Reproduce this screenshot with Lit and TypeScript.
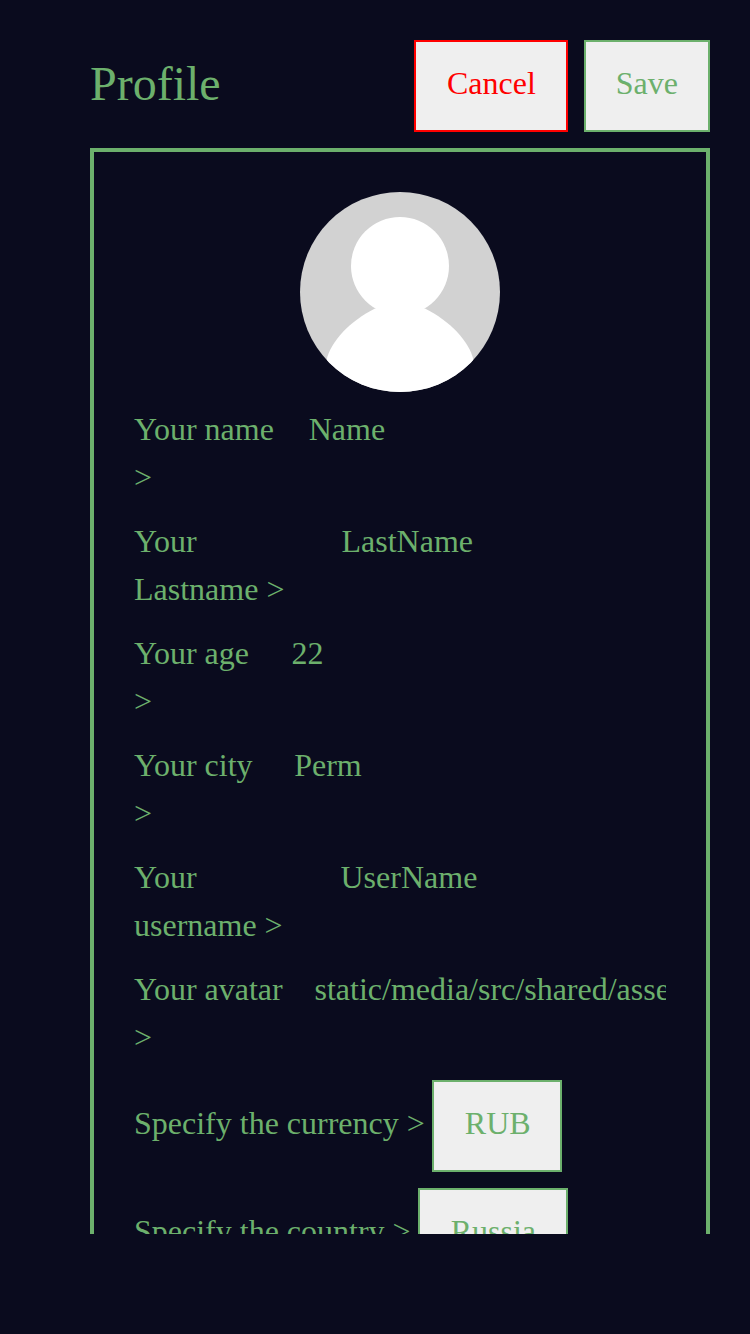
import { LitElement, html, css } from "lit";
import { customElement } from "lit/decorators.js";

interface Field {
  lines: [string, string];
  value: string;
  labelWidth: number;
}

const FIELDS: Field[] = [
  { lines: ["Your name", ">"], value: "Name", labelWidth: 174.7 },
  { lines: ["Your", "Lastname >"], value: "LastName", labelWidth: 207.5 },
  { lines: ["Your age", ">"], value: "22", labelWidth: 157.5 },
  { lines: ["Your city", ">"], value: "Perm", labelWidth: 160.2 },
  { lines: ["Your", "username >"], value: "UserName", labelWidth: 206.5 },
  { lines: ["Your avatar", ">"], value: "static/media/src/shared/assets/avatar.png", labelWidth: 180.5 },
];

const SELECTS = [
  { label: "Specify the currency >", value: "RUB" },
  { label: "Specify the country >", value: "Russia" },
];

@customElement("app-root")
export class AppRoot extends LitElement {
  static styles = css`
    :host {
      display: block;
      box-sizing: border-box;
      height: 1334px;
      padding: 40px 40px 100px 90px;
      overflow: hidden;
      background: #0a0b1e;
      color: #6cb06c;
      font: 32px/48px "Liberation Serif", "Times New Roman", serif;
    }
    .page {
      height: 100%;
      overflow: hidden;
    }
    .header {
      display: flex;
      height: 92px;
      gap: 16px;
      margin-bottom: 16px;
    }
    .title {
      margin: 0 auto 0 0;
      font-size: 48px;
      font-weight: 400;
      line-height: 88px;
    }
    .btn {
      box-sizing: border-box;
      height: 92px;
      margin: 0;
      padding: 0 30px 6px;
      border: 2px solid #6cb06c;
      border-radius: 0;
      background: #efefef;
      color: #6cb06c;
      font: inherit;
      line-height: 82px;
    }
    .cancel {
      padding-left: 30.5px;
      border-color: #ff0000;
      color: #ff0000;
    }
    .card {
      display: flex;
      flex-direction: column;
      gap: 16px;
      border: 4px solid #6cb06c;
      padding: 40px;
    }
    .avatar {
      display: block;
      align-self: center;
      width: 200px;
      height: 200px;
      flex: none;
    }
    .field {
      display: flex;
      height: 96px;
      line-height: 48px;
    }
    .label {
      flex: none;
      margin-top: -3px;
    }
    .value {
      flex: 1;
      min-width: 0;
      height: 48px;
      margin-top: -3px;
      overflow: hidden;
      white-space: nowrap;
    }
    .select {
      display: flex;
      gap: 7.6px;
      height: 92px;
      line-height: 86px;
    }
    .select .btn {
      padding-left: 30.4px;
      padding-right: 29.6px;
    }
  `;

  render() {
    return html`
      <div class="page">
        <header class="header">
          <h1 class="title">Profile</h1>
          <button class="btn cancel">Cancel</button>
          <button class="btn">Save</button>
        </header>
        <section class="card">
          <svg class="avatar" viewBox="0 0 200 200" aria-hidden="true">
            <defs><clipPath id="disc"><circle cx="100" cy="100" r="100" /></clipPath></defs>
            <g clip-path="url(#disc)">
              <rect width="200" height="200" fill="#d2d2d2" />
              <circle cx="100" cy="74" r="49" fill="#fff" />
              <path d="M75 116.5C50 129 31 149 26.5 168V200H173.500V168C169 149 150 129 125 116.500Z" fill="#fff" />
            </g>
          </svg>
          ${FIELDS.map(
            (f) => html`<div class="field">
              <div class="label" style="width:${f.labelWidth}px">${f.lines[0]}<br />${f.lines[1]}</div>
              <div class="value">${f.value}</div>
            </div>`
          )}
          ${SELECTS.map(
            (s) => html`<div class="select">
              <span>${s.label}</span>
              <button class="btn">${s.value}</button>
            </div>`
          )}
        </section>
      </div>
    `;
  }
}
